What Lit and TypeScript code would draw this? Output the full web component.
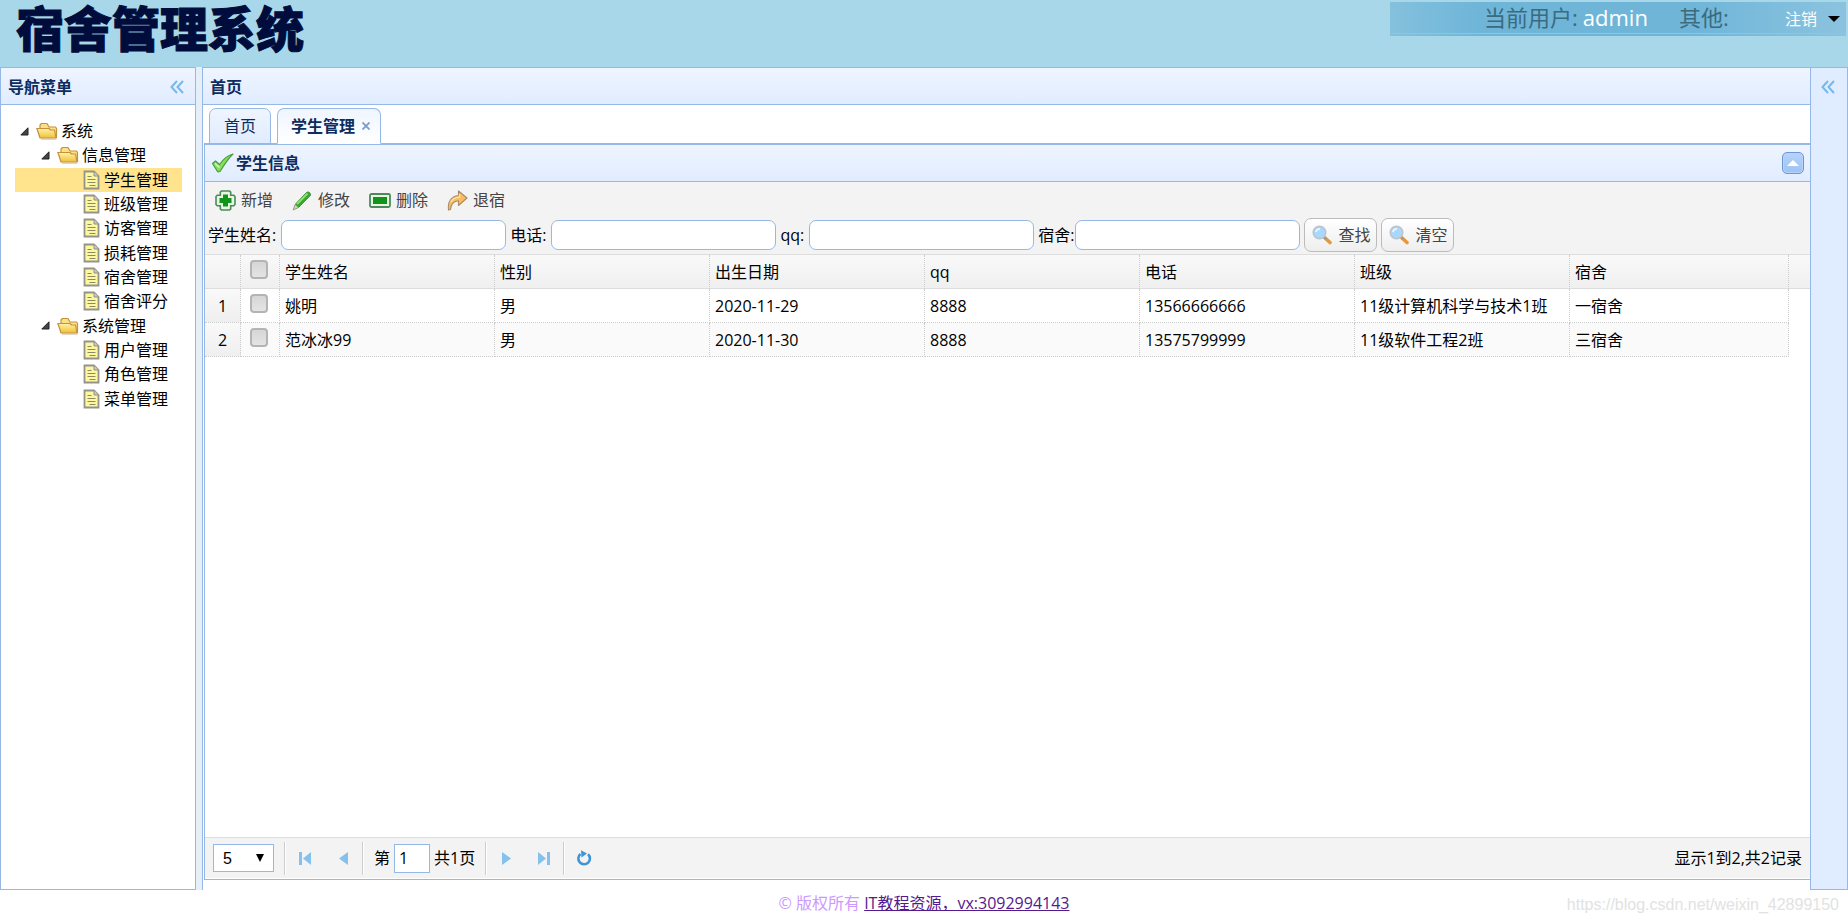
import { LitElement, html, css, svg } from "lit";
import { customElement, state } from "lit/decorators.js";
import { classMap } from "lit/directives/class-map.js";

const icon = (w: number, h: number, body: unknown) =>
  html`<svg width=${w} height=${h} viewBox="0 0 ${w} ${h}" aria-hidden="true">${body}</svg>`;

const folder = () => icon(22, 18, svg`
  <defs><linearGradient id="fg" x1="0" y1="0" x2="0" y2="1"><stop offset="0" stop-color="#fff3a8"/><stop offset="1" stop-color="#f0c038"/></linearGradient></defs>
  <path d="M5 17.300h15.500" stroke="#d8d2c4" stroke-width="1.200"/>
  <path d="M5 15.500h15.500V6.500L19.500 5h-6.500l-2-3.500H5.500L4 3v3.500H1z" fill="#fbe08a" stroke="#c5923a" stroke-width="1.200" stroke-linejoin="round"/>
  <path d="M1 6.500h12l1.500 1.500h4l1.500 8H4z" fill="url(#fg)" stroke="#c5923a" stroke-width="1.200" stroke-linejoin="round"/>`);

const leaf = () => icon(17, 20, svg`
  <path d="M1.500 1.500h9.500l4.500 4.500v12.500h-14z" fill="#fdf8a0" stroke="#93938c" stroke-width="1.800"/>
  <path d="M11 1.500V6h4.500" fill="#c9c9c0" stroke="#93938c"/>
  <path d="M4.500 6.500h4M4.500 9.500h8M4.500 12.500h8M6.500 15.500h6" stroke="#8b8a62" stroke-width="1.200"/>`);

const twist = () => icon(9, 9, svg`<path d="M8 .8V8H.8z" fill="#444" stroke="#222" stroke-linejoin="round"/>`);

const chevrons = () => icon(14, 14, svg`<path d="M7 1L1.500 7L7 13M13 1L7.500 7L13 13" fill="none" stroke="#74b8ee" stroke-width="2"/>`);

const check = () => icon(23, 20, svg`
  <path d="M1.500 10.500l3-2.500 4 3.500C12 6.500 16 2.500 22 1c-5 4.500-9 11-13 17.500-1.500.5-2 .5-2.500 0z" fill="#86e057" stroke="#4a9a45" stroke-width="1.200" stroke-linejoin="round"/>
  <path d="M4 10.500l4.500 4" stroke="#d3f8b8" stroke-width="1.500"/>`);

const plus = () => icon(21, 21, svg`
  <path d="M6.500 1h8l1.200 1.200v3.100h3.100L20 6.500v8l-1.200 1.200h-3.100v3.100L14.500 20h-8l-1.200-1.200v-3.100H2.200L1 14.500v-8l1.200-1.200h3.100V2.200z" fill="#e7f5e5" stroke="#4c8a5a" stroke-width="1.600"/>
  <path d="M8 4.500h5V8h3.500v5H13v3.500H8V13H4.500V8H8z" fill="#12931a"/>`);

const pencil = () => icon(21, 21, svg`
  <path d="M2 19l2-5.500L14.500 2.500c1.500-1.200 4.500 0 4 2.800L7 17z" fill="#38a82c" stroke="#3e8f42"/>
  <path d="M5 14L15.500 3.500" stroke="#8be36c" stroke-width="2"/>
  <path d="M1.200 20l1.800-5.500 3.500 3z" fill="#d9d3bd" stroke="#7f9a78" stroke-width=".8"/>`);

const minus = () => icon(22, 21, svg`
  <rect x="1" y="4" width="20" height="13" rx="1.500" fill="#e7f5e5" stroke="#4c8a5a" stroke-width="1.800"/>
  <rect x="4" y="7" width="14" height="7" fill="#12931a"/>`);

const redo = () => icon(21, 21, svg`
  <path d="M1.500 20C.5 12 4 6.500 11.500 5.500V1l8.500 7-8.500 7.500v-4.800C6.500 11 4 14 3.500 19.500z" fill="#f8bd62" stroke="#a98a65" stroke-width="1.100" stroke-linejoin="round"/>
  <path d="M4 12c1.500-3 4.500-4.500 8.500-4.800V4" fill="none" stroke="#fde3b0" stroke-width="1.300"/>`);

const lens = () => icon(20, 20, svg`
  <path d="M12.500 12.500l5.500 5" stroke="#e8963a" stroke-width="3.600" stroke-linecap="round"/>
  <path d="M11.500 11.500l2.500 2.500" stroke="#999" stroke-width="2"/>
  <circle cx="7.500" cy="7.500" r="6.200" fill="#a9d8ff" stroke="#bcc4ce" stroke-width="1.700"/>
  <path d="M3.800 7c.5-2.200 2-3.300 4.200-3.200" fill="none" stroke="#eaf6ff" stroke-width="1.800"/>`);

interface Node { text: string; level: number; leaf?: boolean }
const NODES: Node[] = [
  { text: "系统", level: 0 },
  { text: "信息管理", level: 1 },
  ...["学生管理", "班级管理", "访客管理", "损耗管理", "宿舍管理", "宿舍评分"].map((text) => ({ text, level: 2, leaf: true })),
  { text: "系统管理", level: 1 },
  ...["用户管理", "角色管理", "菜单管理"].map((text) => ({ text, level: 2, leaf: true })),
];

const COLUMNS = ["学生姓名", "性别", "出生日期", "qq", "电话", "班级", "宿舍"];
const ROWS = [
  ["姚明", "男", "2020-11-29", "8888", "13566666666", "11级计算机科学与技术1班", "一宿舍"],
  ["范冰冰99", "男", "2020-11-30", "8888", "13575799999", "11级软件工程2班", "三宿舍"],
];

const base = css`
  * { box-sizing: border-box; }
  svg { display: block; flex: none; }
  button { font: inherit; color: inherit; background: none; border: 0; padding: 0; display: flex; align-items: center; cursor: pointer; }
  ul { list-style: none; margin: 0; padding: 0; }
  .panel-head {
    display: flex; align-items: center; justify-content: space-between; height: 38px; margin: 0;
    border: 1px solid #95b8e7; background: linear-gradient(#eff5ff, #e0ecff);
    color: #0e2d5f; font-size: 16px; font-weight: bold; line-height: 24px;
  }
`;

@customElement("nav-tree")
export class NavTree extends LitElement {
  @state() private current = "学生管理";
  static styles = [base, css`
    :host { display: block; }
    .tree { display: grid; grid-auto-rows: 1fr; height: 292px; }
    .node { display: flex; align-items: center; width: 100%; height: 100%; white-space: nowrap; }
    .node.selected { background: #ffe48d; }
    .l1 { padding-left: 21px; }
    .l2 { padding-left: 64px; }
    .arrow { width: 21px; padding-left: 5px; }
    .pic { width: 25px; display: flex; }
    .pic.leaf { justify-content: center; }
  `];
  render() {
    return html`<ul class="tree" role="tree">
      ${NODES.map((n) => html`<li role="none">
        <button role="treeitem" aria-level=${n.level + 1} @click=${() => (this.current = n.text)}
          class=${classMap({ node: true, l1: n.level === 1, l2: n.level === 2, selected: n.text === this.current })}>
          ${n.leaf ? "" : html`<span class="arrow">${twist()}</span>`}
          <span class=${classMap({ pic: true, leaf: !!n.leaf })}>${n.leaf ? leaf() : folder()}</span>
          <span>${n.text}</span>
        </button></li>`)}
    </ul>`;
  }
}

@customElement("student-grid")
export class StudentGrid extends LitElement {
  static styles = [base, css`
    :host { display: flex; flex-direction: column; min-height: 0; }
    .panel-head { border-width: 1px 0; padding: 0 6px; flex: none; }
    .caption { display: flex; align-items: center; gap: 2px; }
    .collapse { width: 22px; height: 22px; border: 1px solid #6f96d0; border-radius: 5px; justify-content: center;
      background: linear-gradient(#b5d3fb, #9dc2f5); box-shadow: inset 0 0 0 1px #b9d3f5; }
    .toolbar { background: #f3f3f3; border-bottom: 1px solid #ddd; padding: 6px 4px 2px 3px; }
    .actions { display: flex; gap: 19px; padding-left: 7px; color: #444; height: 24px; }
    .actions button { gap: 5px; }
    .query { display: flex; flex-wrap: wrap; align-items: center; margin-top: 6px; }
    .field { display: flex; align-items: center; gap: 5px; margin-right: 4px; }
    .field.tight { gap: 1px; }
    .field input { width: 225px; height: 30px; border: 1px solid #95b8e7; border-radius: 7px; background: #fff; padding: 0 8px; font: inherit; }
    .btn { width: 73px; height: 34px; margin-right: 4px; gap: 6px; padding-left: 7px; color: #444;
      border: 1px solid #bbb; border-radius: 7px; background: linear-gradient(#fff, #eee); white-space: nowrap; }
    .body { flex: 1; min-height: 0; overflow: hidden; }
    table { width: 100%; table-layout: fixed; border-collapse: separate; border-spacing: 0; }
    .c-num { width: 36px; } .c-check { width: 39px; } .c-last { width: 219px; } .c-fill { width: 21px; }
    th, td { height: 34px; padding: 0 5px; text-align: left; font-weight: normal; line-height: 24px; white-space: nowrap;
      border-right: 1px dotted #ccc; border-bottom: 1px dotted #ccc; overflow: hidden; }
    thead tr { background: linear-gradient(#f9f9f9, #efefef); }
    th { border-bottom: 1px solid #ddd; }
    .alt { background: #fafafa; }
    .num { text-align: center; background: linear-gradient(#f9f9f9, #efefef); padding: 0; }
    .pick { text-align: center; vertical-align: top; padding: 5px 2px 0 0; }
    .pick input { appearance: none; display: block; width: 18px; height: 19px; margin: 0 auto; border: 2px solid #b4b4b4; border-radius: 4px; background: linear-gradient(#d6d6d6, #e4e4e4); }
    .fill { border-right: 0; }
    td.fill { border: 0; background: #fff; }
    .pager { display: flex; align-items: center; height: 42px; flex: none; background: #f3f3f3; border-top: 1px solid #ddd; border-bottom: 1px solid #fff; padding: 0 8px; }
    .size { display: grid; align-items: center; }
    .size select { grid-area: 1 / 1; appearance: none; width: 61px; height: 28px; border: 1px solid #95b8e7; background: #fff; padding: 0 9px; color: #000;
      font: 16px "Liberation Sans", sans-serif; border-radius: 0; }
    .size svg { grid-area: 1 / 1; justify-self: end; margin-right: 10px; pointer-events: none; }
    .sep { width: 2px; height: 33px; background: linear-gradient(90deg, #ccc 50%, #fff 50%); }
    .first { margin-left: 10px; }
    .nav { width: 38px; height: 32px; justify-content: center; }
    .page { display: flex; align-items: center; gap: 4px; padding: 0 10px; }
    .page input { width: 36px; height: 29px; border: 1px solid #95b8e7; padding: 0 4px; font: inherit; background: #fff; }
    .info { margin-left: auto; }
  `];
  private field(id: string, label: string, tight = false) {
    return html`<div class=${classMap({ field: true, tight })}><label for=${id}>${label}</label><input id=${id} type="text"></div>`;
  }
  render() {
    return html`
      <h2 class="panel-head">
        <span class="caption">${check()}学生信息</span>
        <button class="collapse" aria-label="收起">${icon(12, 6, svg`<path d="M0 6L6 0l6 6z" fill="#fff"/>`)}</button>
      </h2>
      <div class="toolbar">
        <div class="actions">
          <button>${plus()}新增</button><button>${pencil()}修改</button>
          <button>${minus()}删除</button><button>${redo()}退宿</button>
        </div>
        <div class="query">
          ${this.field("name", "学生姓名:")}${this.field("tel", "电话:")}${this.field("qq", "qq:")}${this.field("dorm", "宿舍:", true)}
          <button class="btn">${lens()}查找</button><button class="btn">${lens()}清空</button>
        </div>
      </div>
      <div class="body"><table>
        <colgroup><col class="c-num"><col class="c-check">${COLUMNS.map((_, i) => html`<col class=${i === 6 ? "c-last" : ""}>`)}<col class="c-fill"></colgroup>
        <thead><tr><th></th><th class="pick"><input type="checkbox" aria-label="全选"></th>
          ${COLUMNS.map((c) => html`<th scope="col">${c}</th>`)}<th class="fill"></th></tr></thead>
        <tbody>${ROWS.map((r, i) => html`<tr class=${i % 2 ? "alt" : ""}>
          <td class="num">${i + 1}</td><td class="pick"><input type="checkbox" aria-label=${r[0]}></td>
          ${r.map((v) => html`<td>${v}</td>`)}<td class="fill"></td></tr>`)}</tbody>
      </table></div>
      <div class="pager">
        <label class="size"><select aria-label="每页条数"><option selected>5</option><option>10</option></select>
          ${icon(8, 8, svg`<path d="M0 0h8L4 8z" fill="#000"/>`)}</label>
        <span class="sep first"></span>
        <button class="nav" aria-label="第一页">${icon(12, 13, svg`<path d="M0 0h3v13H0zM12 0v13L4 6.500z" fill="#84c1ec"/>`)}</button>
        <button class="nav" aria-label="上一页">${icon(9, 13, svg`<path d="M9 0v13L0 6.500z" fill="#84c1ec"/>`)}</button>
        <span class="sep"></span>
        <span class="page"><label for="page">第</label><input id="page" type="text" .value=${"1"}><span>共1页</span></span>
        <span class="sep"></span>
        <button class="nav" aria-label="下一页">${icon(9, 13, svg`<path d="M0 0v13l9-6.500z" fill="#84c1ec"/>`)}</button>
        <button class="nav" aria-label="最后一页">${icon(12, 13, svg`<path d="M12 0H9v13h3zM0 0v13l8-6.500z" fill="#84c1ec"/>`)}</button>
        <span class="sep"></span>
        <button class="nav" aria-label="刷新">${icon(16, 16, svg`<path d="M4.500 4A5.800 5.800 0 1 0 12 4.200" fill="none" stroke="#3f95d6" stroke-width="2.600"/><path d="M5 .2l6 3.300-5.500 4z" fill="#3f95d6"/>`)}</button>
        <span class="info">显示1到2,共2记录</span>
      </div>`;
  }
}

@customElement("app-root")
export class AppRoot extends LitElement {
  static styles = [base, css`
    :host { display: grid; height: 100vh; grid-template: 67px minmax(0, 1fr) 33px / 196px 6px minmax(0, 1fr) 38px;
      font: 16px/24px "Open Sans", "Noto Sans CJK SC", sans-serif; color: #000; background: #fff; position: relative; }
    .top { grid-column: 1 / -1; background: #a8d7e9; display: flex; justify-content: space-between; align-items: flex-start; }
    .brand { margin: 0; padding-left: 16px; font: 900 48px/62px "Liberation Sans", "Noto Sans CJK SC", sans-serif; color: #000d3c; -webkit-text-stroke: 1px #000d3c; }
    .user { display: flex; align-items: center; width: 456px; height: 34px; margin: 2px 2px 0 0; padding: 0 6px 4px 94px; font-size: 22px; color: #3c6a80;
      background: linear-gradient(transparent 31px, #8cc6e2 31px, #8cc6e2 32px, transparent 32px), linear-gradient(90deg, #84c1dd, #6eb5d8 20%, #6eb5d8 65%, #8bc3df); }
    .admin { color: #fff; margin: 0 31px 0 5px; }
    .logout { margin-left: auto; font-size: 16px; color: #fff; gap: 11px; padding-top: 4px; }
    .west { border: 1px solid #95b8e7; border-top: 0; }
    .west .panel-head { border-width: 1px 0; padding: 1px 11px 0 7px; }
    .west nav-tree { margin: 14px 13px 0 14px; }
    .split { background: #e6eef8; }
    .center { display: flex; flex-direction: column; border-left: 1px solid #95b8e7; padding-bottom: 10px; min-width: 0; }
    .center > .panel-head { border-width: 1px 0; padding: 1px 7px 0; flex: none; }
    .tabs { display: flex; gap: 6px; padding: 3px 6px 0 5px; height: 39px; margin-left: 1px; border-bottom: 1px solid #95b8e7; flex: none; }
    .tab { height: 36px; border: 1px solid #95b8e7; border-radius: 7px 7px 0 0; padding: 0 14px; color: #0e2d5f; background: linear-gradient(#eff5ff, #e0ecff); white-space: nowrap; }
    .tab.on { background: linear-gradient(#eff5ff, #fff); border-bottom-color: #fff; font-weight: bold; padding: 0 10px 0 13px; gap: 7px; }
    .center student-grid { flex: 1; margin-left: 1px; border-left: 1px solid #95b8e7; border-bottom: 1px solid #95b8e7; }
    .east { border: 1px solid #95b8e7; background: #e0ecff; padding: 12px 10px; }
    .foot { grid-column: 1 / -1; text-align: center; padding-top: 1px; color: #c9f; }
    .foot a { color: #551a8b; }
    .mark { position: absolute; right: 9px; bottom: 6px; font: 16px/24px "Liberation Sans", sans-serif; color: #e2e2e2; }
  `];
  render() {
    return html`
      <header class="top">
        <h1 class="brand">宿舍管理系统</h1>
        <div class="user"><span>当前用户:</span><span class="admin">admin</span><span>其他:</span>
          <button class="logout">注销${icon(12, 6, svg`<path d="M0 0h12L6 6z" fill="#000"/>`)}</button></div>
      </header>
      <nav class="west">
        <h2 class="panel-head">导航菜单<button aria-label="折叠">${chevrons()}</button></h2>
        <nav-tree></nav-tree>
      </nav>
      <div class="split"></div>
      <main class="center">
        <h2 class="panel-head">首页</h2>
        <div class="tabs" role="tablist">
          <button class="tab" role="tab">首页</button>
          <button class="tab on" role="tab" aria-selected="true">学生管理${icon(8, 8, svg`<path d="M.5 .5l7 7M7.500 .5l-7 7" stroke="#7b9cc8" stroke-width="1.800"/>`)}</button>
        </div>
        <student-grid></student-grid>
      </main>
      <aside class="east"><button aria-label="展开">${chevrons()}</button></aside>
      <footer class="foot">© 版权所有 <a href="#">IT教程资源，vx:3092994143</a></footer>
      <div class="mark">https://blog.csdn.net/weixin_42899150</div>`;
  }
}
